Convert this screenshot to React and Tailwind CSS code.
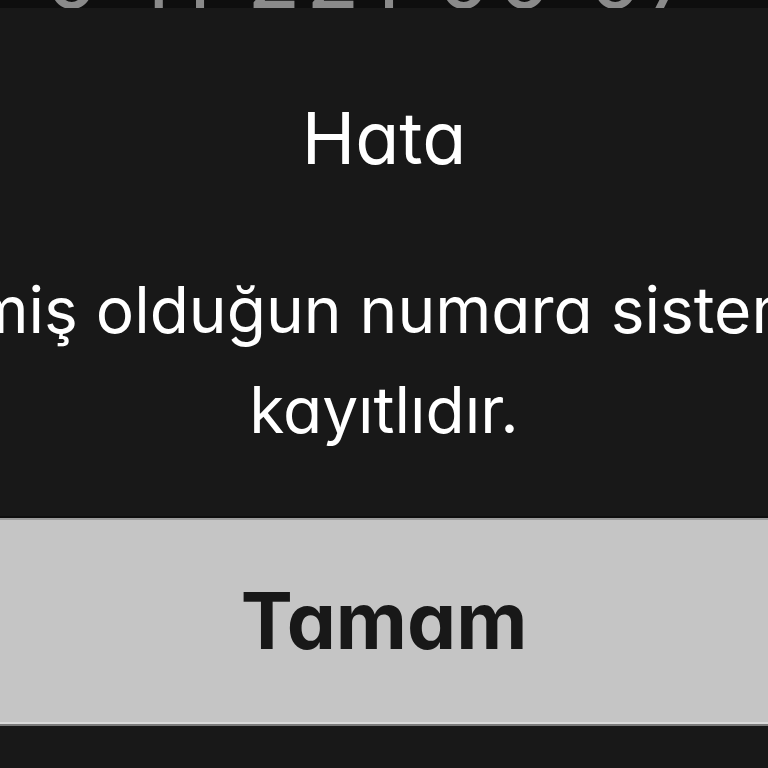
import React from 'react';

const font = "font-['Inter','Noto_Sans',sans-serif] [font-feature-settings:'cv11','ss01']";

export default function App() {
  return (
    <div className={`h-[768px] w-full overflow-hidden bg-[#181818] flex flex-col ${font}`}>
      {/* phone number behind the dialog, mostly hidden */}
      <div className="h-[8px] shrink-0 bg-[#0e0e0e] relative overflow-hidden">
        <div className="absolute left-[44px] bottom-[-12px] text-[#8a8a8a] text-[88px] leading-none tracking-[0.06em] whitespace-nowrap">
          0 11 221 00 07
        </div>
      </div>

      {/* dialog body */}
      <div className="h-[508px] shrink-0 flex flex-col items-center">
        <h1 className="mt-[94px] text-white text-[72px] leading-none font-normal">Hata</h1>
        <div className="mt-[86px] w-full flex justify-center">
          <p className="text-white text-[64px] leading-[100px] text-center whitespace-nowrap">
            Girmiş olduğun numara sistemde
            <br />
            kayıtlıdır.
          </p>
        </div>
      </div>

      {/* button */}
      <div className="h-[2px] shrink-0 bg-[#0f0f0f]" />
      <div className="h-[2px] shrink-0 bg-[#9c9c9c]" />
      <button className="h-[202px] shrink-0 w-full bg-[#c5c5c5] flex items-center justify-center text-[#181818] text-[78px] font-bold leading-none">
        Tamam
      </button>
      <div className="h-[2px] shrink-0 bg-[#dadada]" />
      <div className="h-[2px] shrink-0 bg-[#7a7a7a]" />
      <div className="flex-1 bg-[#181818]" />
    </div>
  );
}
